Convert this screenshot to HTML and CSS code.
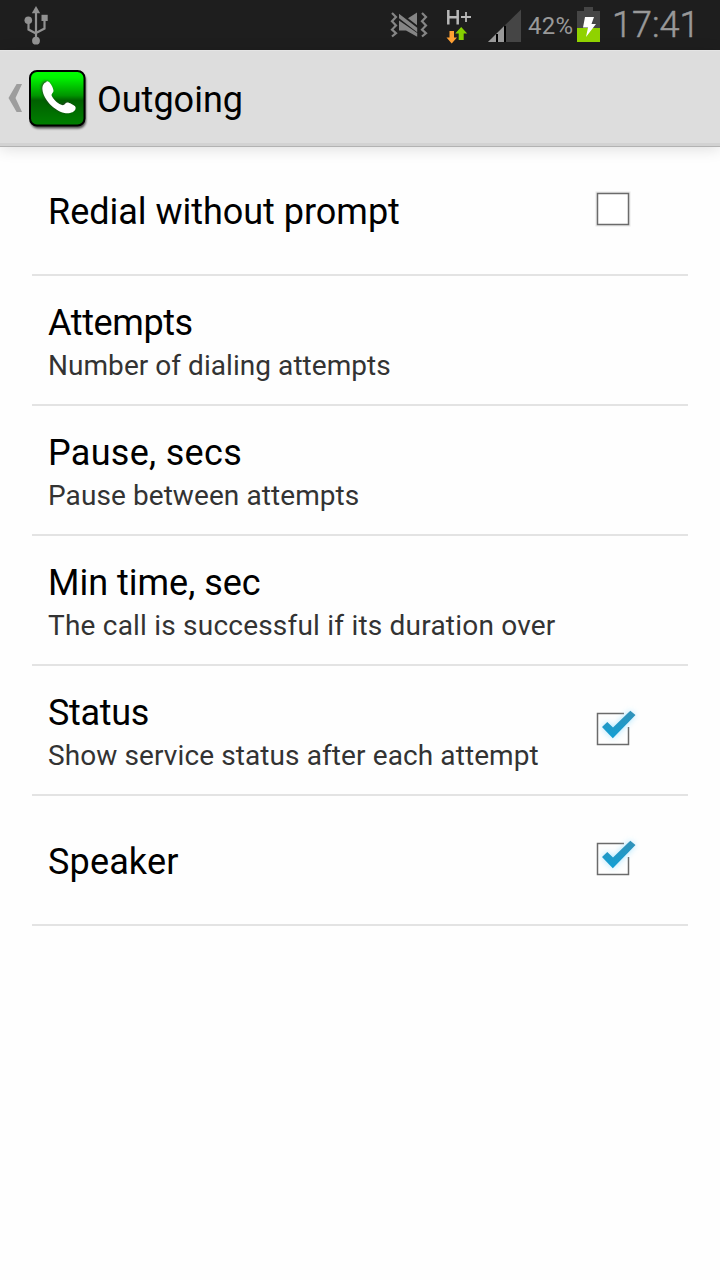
FILE: index.html
```html
<!DOCTYPE html>
<html lang="en">
<head>
<meta charset="utf-8">
<title>Outgoing</title>
<link rel="stylesheet" href="styles.css">
</head>
<body>
<div class="screen">
  <div class="status-bar">
    <svg class="usb-icon" width="28" height="40" viewBox="0 0 28 40" fill="none" stroke="#919191" stroke-width="2.2">
      <path d="M14 8v27M6.500 15v9.500L14 28.500M22.500 15v8.500L14 28"/>
      <path d="M14 1l4.200 7.300H9.800z" fill="#919191" stroke="none"/>
      <circle cx="6.300" cy="15.200" r="3.800" fill="#919191" stroke="none"/>
      <rect x="19.500" y="9.800" width="6.200" height="6.200" fill="#919191" stroke="none"/>
      <circle cx="14" cy="35.700" r="3.900" fill="#919191" stroke="none"/>
    </svg>
    <svg class="tray-icons" width="142" height="50" viewBox="380 0 142 50">
      <g fill="none" stroke="#858585" stroke-width="2.200">
        <path d="M392 13l4 4-4 4.200 4 4.200-4 4.200 4 3.600-4 3.300"/>
        <path d="M422 13l4 4-4 4.200 4 4.200-4 4.200 4 3.600-4 3.300"/>
      </g>
      <path fill="#858585" d="M399 20.500l18.200 12.500v3.800L406 30.500h-7zM399 13.800l18.200 14v4.400L399 18.200zM408 18.200l9-5.700v12.700z"/>
      <g fill="none" stroke="#b8b8b8">
        <path d="M448.300 10v14.600M457.700 10v14.600M448 17.200h10" stroke-width="2.500"/>
        <path d="M461 17h10M466 12v10" stroke-width="1.800"/>
      </g>
      <path fill="#ffa033" d="M449.500 31h4.500v6.500h3L451.700 43.500 446.500 37.500h3z"/>
      <path fill="#86cf00" d="M461.200 27l6 6.500h-3.500v6.500h-5v-6.500h-3.500z"/>
      <path fill="#454545" d="M488 42L521 9.500V42z"/>
      <path fill="#999" d="M488 42L505.500 24.700V42z"/>
      <path fill="#000" d="M496 34h2v8h-2zM504 25.500h2V42h-2z"/>
    </svg>
    <span class="battery-text">42%</span>
    <svg class="battery-icon" width="23" height="35" viewBox="0 0 23 35">
      <path fill="#454545" d="M7 0h9v4h7v17H0V4h7z"/>
      <path fill="#90d200" d="M0 21h23v14H0z"/>
      <path fill="#fff" d="M8 10h9l-2.500 7H19L9 30l2-9.500H6z"/>
    </svg>
    <span class="clock">17:41</span>
  </div>

  <div class="action-bar">
    <svg class="back-icon" width="14" height="28" viewBox="0 0 14 28"><path fill="#9d9d9d" d="M8.600 0H14L7.500 14l6.500 14H8.600L.500 14z"/></svg>
    <svg class="app-icon" width="60" height="62" viewBox="0 0 60 62">
      <defs>
        <linearGradient id="green" x1="0" y1="0" x2="0" y2="1">
          <stop offset="0" stop-color="#00ff00"/><stop offset=".12" stop-color="#00f400"/>
          <stop offset=".45" stop-color="#009500"/><stop offset=".54" stop-color="#006000"/>
          <stop offset="1" stop-color="#008000"/>
        </linearGradient>
        <filter id="soft" x="-20%" y="-20%" width="140%" height="140%"><feGaussianBlur stdDeviation="1"/></filter>
      </defs>
      <rect x="1.500" y="3" width="55.500" height="55.500" rx="7.500" opacity=".65" filter="url(#soft)"/>
      <rect x="1" y="1" width="54.500" height="54.500" rx="7" fill="url(#green)" stroke="#000" stroke-width="2"/>
      <path transform="translate(-.8 -1)" fill="#333" opacity=".7" filter="url(#soft)" d="M17 12c-3 1-4.500 4-4 8 1 9 11 21 22 23.500 5 .7 10-.5 11-4 .7-2-.5-3.500-4-5-3.500-2-5-2-6.500 0-1 1.500-3 1.500-5.500 0-4-2.500-7.500-6.500-8-9 0-1.500 2-2.500 2-4 0-3-3-8-4.500-9-1-.7-1.800-.8-2.500-.5z"/>
      <path fill="#fff" d="M17.500 12c-3 1-4.500 4-4 8 1 9 11 20.500 22 23 5 .7 10-.5 11-4 .7-2-.5-3.500-4-5-3.500-2-5-2-6.500 0-1 1.500-3 1.500-5.500 0-4-2.500-7.500-6.500-8-9 0-1.500 2-2.500 2-4 0-3-3-8-4.500-9-1-.7-1.800-.8-2.500-.5z"/>
    </svg>
    <h1 class="title">Outgoing</h1>
  </div>

  <div class="list">
    <div class="row single redial">
      <div class="text"><div class="name">Redial without prompt</div></div>
      <svg class="check" width="60" height="60" viewBox="0 0 60 60"><path d="M17.500 13.500h31v31h-31z" fill="none" stroke="#e8e8e8" stroke-width="4"/><path d="M17.500 13.500h31v31h-31z" fill="#fff" stroke="#6b6b6b" stroke-width="1.500"/></svg>
    </div>
    <div class="row attempts">
      <div class="text"><div class="name">Attempts</div><div class="summary">Number of dialing attempts</div></div>
    </div>
    <div class="row pause">
      <div class="text"><div class="name">Pause, secs</div><div class="summary">Pause between attempts</div></div>
    </div>
    <div class="row min-time">
      <div class="text"><div class="name">Min time, sec</div><div class="summary">The call is successful if its duration over</div></div>
    </div>
    <div class="row status">
      <div class="text"><div class="name">Status</div><div class="summary">Show service status after each attempt</div></div>
      <svg class="check" width="60" height="60" viewBox="0 0 60 60">
        <defs>
          <linearGradient id="tick" x1="0" y1="0" x2="0" y2="1"><stop offset="0" stop-color="#3392b8"/><stop offset="1" stop-color="#109fd5"/></linearGradient>
          <filter id="glow" x="-40%" y="-40%" width="180%" height="180%"><feGaussianBlur stdDeviation="3"/></filter>
        </defs>
        <path d="M44 13.500H17.500v31h31V27" fill="none" stroke="#6b6b6b" stroke-width="1.500"/>
        <path d="M22 27l5-5 6 6L50 11l5 4.500L33 38z" fill="#8edcff" opacity=".8" filter="url(#glow)"/>
        <path d="M22 27l5.300-5 5.700 5.500L50.300 10.800l5.200 4.200L32.800 38.300z" fill="url(#tick)"/>
      </svg>
    </div>
    <div class="row single speaker">
      <div class="text"><div class="name">Speaker</div></div>
      <svg class="check" width="60" height="60" viewBox="0 0 60 60">
        <path d="M44 13.500H17.500v31h31V27" fill="none" stroke="#6b6b6b" stroke-width="1.500"/>
        <path d="M22 27l5-5 6 6L50 11l5 4.500L33 38z" fill="#8edcff" opacity=".8" filter="url(#glow)"/>
        <path d="M22 27l5.300-5 5.700 5.500L50.300 10.800l5.200 4.200L32.800 38.300z" fill="url(#tick)"/>
      </svg>
    </div>
  </div>
</div>
</body>
</html>
```
FILE: styles.css
```css
* { box-sizing: border-box; }

body {
  margin: 0;
  font-family: Roboto, "Liberation Sans", sans-serif;
  color: #000;
  background: #fefefe;
}

.screen {
  width: 720px;
  height: 1280px;
  overflow: hidden;
  background: #fefefe;
}

.status-bar {
  display: flex;
  height: 50px;
  background: #1e1e1e;
  color: #999;
}

.usb-icon { margin: 5px 0 0 22px; }
.tray-icons { margin-left: 330px; }

.battery-text {
  width: 50px;
  margin-left: 6px;
  margin-right: -1px;
  font-size: 24px;
  line-height: 52px;
  letter-spacing: 0.2px;
  white-space: nowrap;
}

.battery-icon { margin-top: 7px; }

.clock {
  margin-left: 12px;
  font-size: 36px;
  font-weight: 300;
  line-height: 51px;
  -webkit-text-stroke: 0.5px #999;
  white-space: nowrap;
}

.action-bar {
  display: flex;
  height: 97px;
  background: #ddd;
  border-top: 1px solid #e4e4e4;
  border-bottom: 1px solid #b2b2b2;
  box-shadow: inset 0 -3px #d2d2d2, 0 2px 14px rgba(0, 0, 0, 0.13);
}

.back-icon { margin: 33px 0 0 8px; }
.app-icon { margin: 19px 0 0 7px; }

.title {
  margin: 0 0 0 8px;
  font-size: 36px;
  font-weight: 400;
  line-height: 99px;
  letter-spacing: 0;
}

.list { padding: 0 32px; margin-top: -1px; }

.row {
  display: flex;
  justify-content: space-between;
  height: 130px;
  padding: 26px 48px 0 16px;
  border-bottom: 2px solid #e3e3e3;
}

.name {
  font-size: 36px;
  line-height: 42px;
}

.summary {
  margin-top: 5px;
  font-size: 28px;
  line-height: 34px;
  color: #333;
}

.redial .name { letter-spacing: -0.02px; }
.attempts .name { letter-spacing: -0.4px; }
.attempts .summary { letter-spacing: 0.05px; }
.pause .name { letter-spacing: 0.3px; }
.pause .summary { letter-spacing: 0.08px; }
.min-time .name { letter-spacing: 0; }
.min-time .summary { letter-spacing: 0.21px; }
.status .name { letter-spacing: -0.3px; }
.status .summary { letter-spacing: 0.1px; }
.speaker .name { letter-spacing: 0.15px; }

.single .name { padding-top: 19px; }
.text { white-space: nowrap; }
.check { margin-top: 8px; }
```
